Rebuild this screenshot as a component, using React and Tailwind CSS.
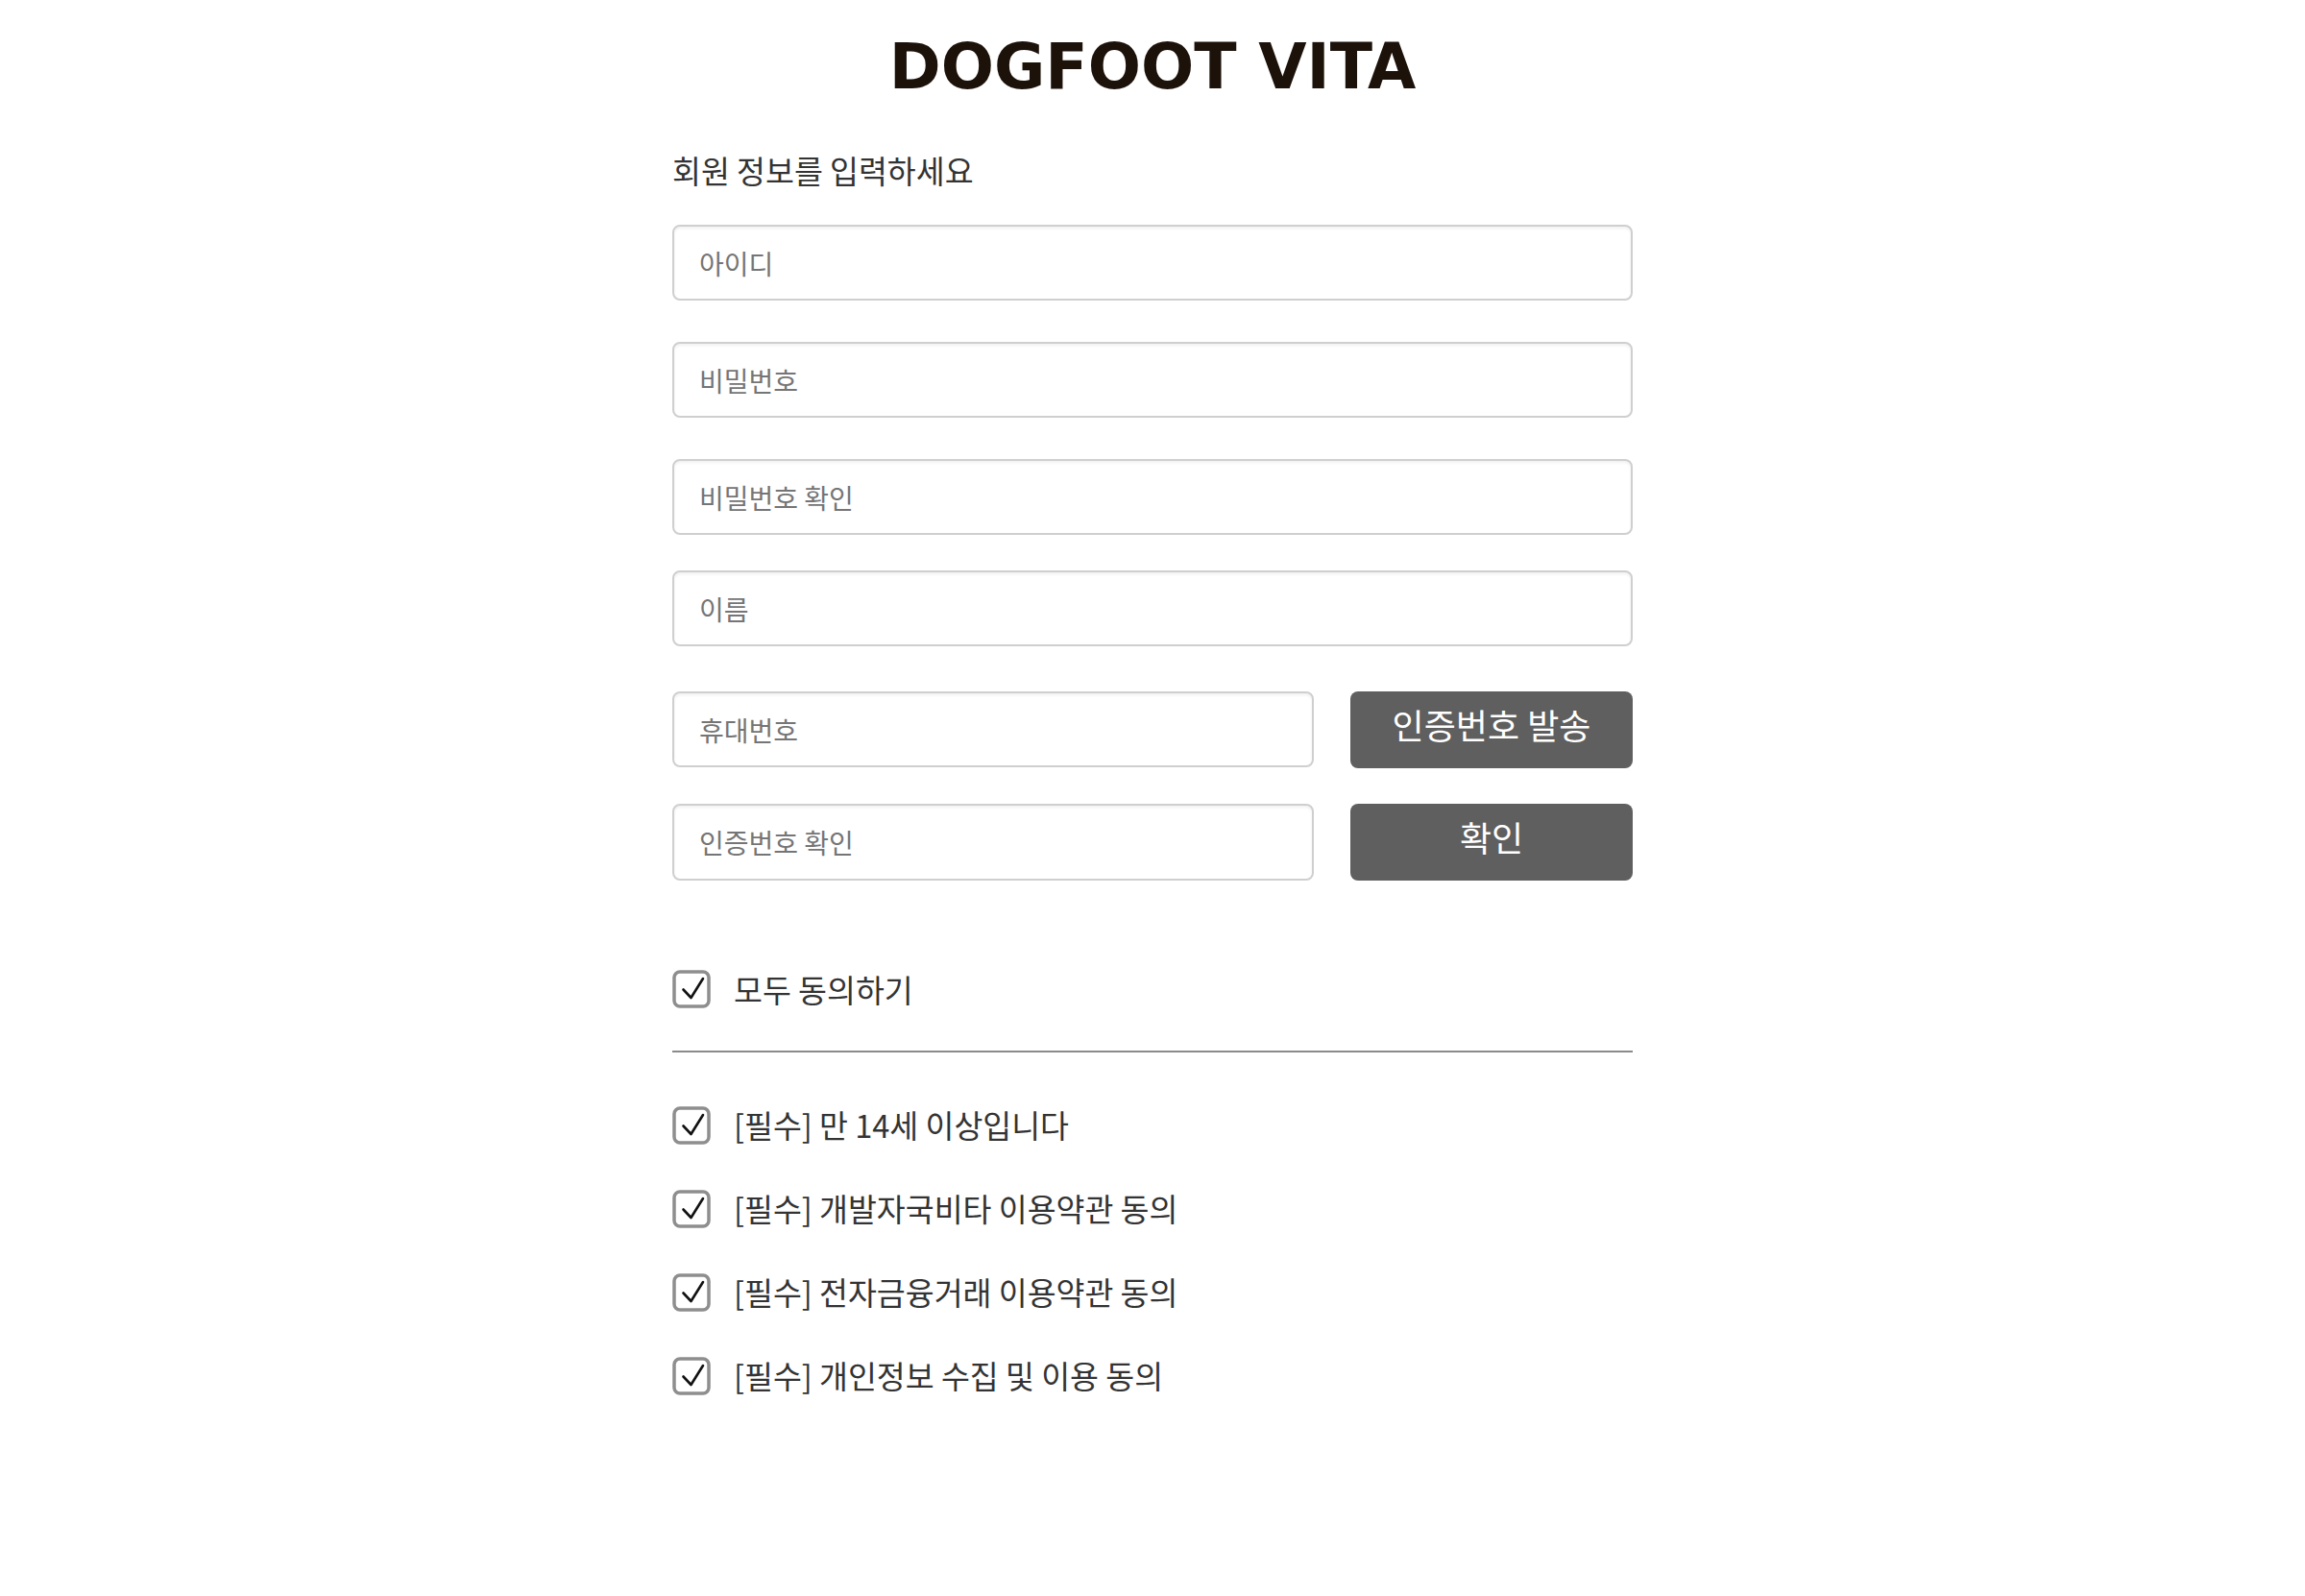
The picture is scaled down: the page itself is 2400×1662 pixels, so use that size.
import React, { useState } from "react";

const KR = { fontFamily: '"Noto Sans CJK KR", "Noto Sans", sans-serif' };

const CheckBox = ({ checked, onToggle }) => (
  <button type="button" onClick={onToggle} className="shrink-0 w-[40px] h-[40px]">
    <svg width="40" height="40" viewBox="0 0 40 40">
      <rect x="2" y="2" width="36" height="36" rx="6" fill="#fff" stroke="#8e8e8e" strokeWidth="3.5" />
      {checked && (
        <path d="M11.5 20.5 L19.5 29 L32 9" fill="none" stroke="#111" strokeWidth="2.6" strokeLinecap="round" strokeLinejoin="round" />
      )}
    </svg>
  </button>
);

const Field = ({ placeholder, className = "", type = "text" }) => (
  <input
    type={type}
    placeholder={placeholder}
    style={KR}
    className={`h-[79px] border-2 border-[#cfcfcf] rounded-lg pl-[26px] text-[28px] text-[#333] placeholder:text-[#757575] shadow-[inset_0_2px_3px_rgba(0,0,0,0.06)] outline-none ${className}`}
  />
);

const terms = [
  "[필수] 만 14세 이상입니다",
  "[필수] 개발자국비타 이용약관 동의",
  "[필수] 전자금융거래 이용약관 동의",
  "[필수] 개인정보 수집 및 이용 동의",
];

export default function App() {
  const [checks, setChecks] = useState([true, true, true, true]);
  const all = checks.every(Boolean);

  const toggleAll = () => setChecks(checks.map(() => !all));
  const toggle = (i) => setChecks(checks.map((c, j) => (j === i ? !c : c)));

  return (
    <div className="min-h-screen bg-white">
      <div className="w-[1000px] mx-auto pt-[37px]">
        <h1
          className="text-center text-[65px] leading-[65px] font-bold text-[#1c120a]"
          style={{ fontFamily: '"DejaVu Sans", sans-serif' }}
        >
          DOGFOOT VITA
        </h1>

        <p style={KR} className="mt-[55px] text-[32.5px] leading-[40px] text-[#333]">
          회원 정보를 입력하세요
        </p>

        <div className="mt-[37px] flex flex-col">
          <Field placeholder="아이디" />
          <Field placeholder="비밀번호" type="password" className="mt-[43px]" />
          <Field placeholder="비밀번호 확인" type="password" className="mt-[43px]" />
          <Field placeholder="이름" className="mt-[37px]" />

          <div className="mt-[47px] flex gap-[38px]">
            <Field placeholder="휴대번호" className="flex-1" />
            <button
              style={KR}
              className="w-[294px] h-[80px] rounded-lg bg-[#5f5f5f] text-white text-[36px] leading-none pb-[12px]"
            >
              인증번호 발송
            </button>
          </div>
          <div className="mt-[37px] flex gap-[38px]">
            <Field placeholder="인증번호 확인" className="flex-1 h-[80px]" />
            <button
              style={KR}
              className="w-[294px] h-[80px] rounded-lg bg-[#5f5f5f] text-white text-[36px] leading-none pb-[12px]"
            >
              확인
            </button>
          </div>
        </div>

        <div className="mt-[89px] flex items-center gap-[24px]">
          <CheckBox checked={all} onToggle={toggleAll} />
          <span style={KR} className="text-[32.5px] text-[#333]">
            모두 동의하기
          </span>
        </div>

        <div className="mt-[39px] h-[2px] bg-[#8a8a8a]" />

        <ul className="mt-[56px] flex flex-col gap-[47px]">
          {terms.map((t, i) => (
            <li key={t} className="flex items-center gap-[24px] h-[40px]">
              <CheckBox checked={checks[i]} onToggle={() => toggle(i)} />
              <span style={KR} className="text-[32.5px] text-[#333]">
                {t}
              </span>
            </li>
          ))}
        </ul>
      </div>
    </div>
  );
}
